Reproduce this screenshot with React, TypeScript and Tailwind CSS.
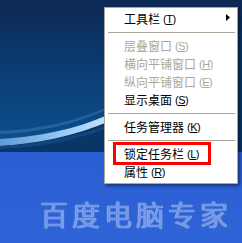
import React from "react";

type Item =
  | { type: "item"; label: string; key: string; disabled?: boolean; submenu?: boolean; boxed?: boolean }
  | { type: "sep" };

const items: Item[] = [
  { type: "item", label: "工具栏", key: "T", submenu: true },
  { type: "sep" },
  { type: "item", label: "层叠窗口", key: "S", disabled: true },
  { type: "item", label: "横向平铺窗口", key: "H", disabled: true },
  { type: "item", label: "纵向平铺窗口", key: "E", disabled: true },
  { type: "item", label: "显示桌面", key: "S" },
  { type: "sep" },
  { type: "item", label: "任务管理器", key: "K" },
  { type: "sep" },
  { type: "item", label: "锁定任务栏", key: "L", boxed: true },
  { type: "item", label: "属性", key: "R" },
];

function Wallpaper() {
  return (
    <svg className="absolute inset-0" width="242" height="243" viewBox="0 0 242 243">
      <defs>
        <linearGradient id="sky" x1="0" y1="0" x2="0" y2="1">
          <stop offset="0" stopColor="#0d2853" />
          <stop offset="0.45" stopColor="#0b3e76" />
          <stop offset="1" stopColor="#0c5291" />
        </linearGradient>
        <linearGradient id="band" x1="0" y1="0" x2="1" y2="0">
          <stop offset="0" stopColor="#5f9ad6" />
          <stop offset="0.6" stopColor="#9ccbf5" />
          <stop offset="1" stopColor="#c6e4ff" />
        </linearGradient>
        <linearGradient id="ground" x1="0" y1="0" x2="0" y2="1">
          <stop offset="0" stopColor="#2b5ed3" />
          <stop offset="1" stopColor="#2f63d8" />
        </linearGradient>
      </defs>
      <rect x="0" y="0" width="242" height="160" fill="url(#sky)" />
      <path d="M0,131 C35,130 75,122 110,106 L110,108 C75,125 35,133 0,134 Z" fill="#2f6ea8" opacity="0.7" />
      <path d="M0,140 C35,138 75,131 110,115 L242,40 L242,160 L0,160 Z" fill="#0a3567" />
      <path d="M0,139 C35,137 75,130 110,114 L110,121 C75,136 35,144 0,146 Z" fill="url(#band)" />
      <path d="M0,146 C35,144 75,138 110,124 L110,127 C75,141 35,148 0,149 Z" fill="#134a85" opacity="0.8" />
      <rect x="0" y="152" width="242" height="91" fill="url(#ground)" />
    </svg>
  );
}

export default function App() {
  return (
    <div className="relative w-[242px] h-[243px] overflow-hidden bg-[#2d61d5]">
      <Wallpaper />

      <div
        className="absolute left-[40px] top-[197px] text-[28px] leading-[34px] tracking-[4px] text-[#7397e2] whitespace-nowrap"
        style={{
          fontFamily: '"Noto Sans CJK SC", sans-serif',
          textShadow: "0 0 1px #adc6f7, 0 0 1px #adc6f7",
        }}
      >
        百度电脑专家
      </div>

      <div
        className="absolute left-[104px] top-[7px] w-[134px] flex flex-col py-[2px] bg-white border border-[#aca899] shadow-[2px_2px_3px_rgba(0,0,0,0.45)]"
        style={{ fontFamily: '"Noto Sans CJK SC", "Liberation Sans", sans-serif' }}
      >
        {items.map((it, i) =>
          it.type === "sep" ? (
            <div key={i} className="h-[9px] flex items-center pl-[3px] pr-[2px]">
              <div className="h-px w-full bg-[#aca899]" />
            </div>
          ) : (
            <div
              key={i}
              className={`relative h-[18px] flex items-center pl-[19px] text-[12px] leading-[18px] whitespace-nowrap ${
                it.disabled ? "text-[#aca899]" : "text-black"
              }`}
            >
              <span>{it.label}</span>
              <span className="ml-[3px] text-[11px] tracking-[-0.5px]" style={{ fontFamily: '"Liberation Sans", sans-serif' }}>
                (<span className="underline underline-offset-1">{it.key}</span>)
              </span>
              {it.submenu && (
                <svg className="absolute right-[7px] top-[4px]" width="4" height="7" viewBox="0 0 4 7">
                  <path d="M0,0 L4,3.5 L0,7 Z" fill="#000" />
                </svg>
              )}
              {it.boxed && (
                <div className="absolute left-[8px] top-[-3px] w-[98px] h-[23px] border-[3px] border-[#ff0000]" />
              )}
            </div>
          )
        )}
      </div>
    </div>
  );
}
